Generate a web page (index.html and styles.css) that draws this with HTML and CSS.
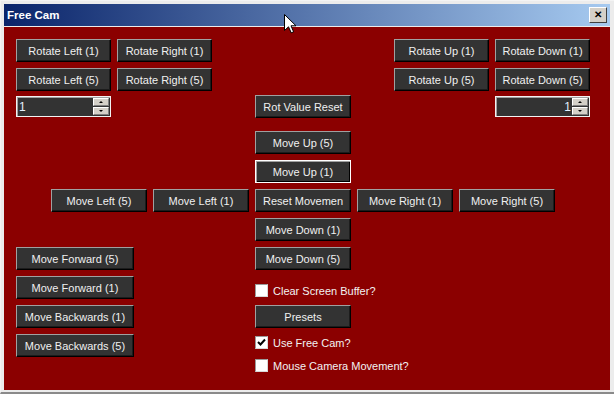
FILE: index.html
```html
<!DOCTYPE html>
<html lang="en">
<head>
  <meta charset="UTF-8">
  <title>Free Cam</title>
  <link rel="stylesheet" href="styles.css">
</head>
<body>
  <div class="window">
    <div class="titlebar">
      <span class="title">Free Cam</span>
      <span class="close">&#x2715;</span>
    </div>

    <div class="client">
      <!-- rotate buttons -->
      <div class="row">
        <div class="grp">
          <button class="btn narrow">Rotate Left (1)</button>
          <button class="btn narrow">Rotate Right (1)</button>
        </div>
        <div class="grp">
          <button class="btn narrow">Rotate Up (1)</button>
          <button class="btn narrow">Rotate Down (1)</button>
        </div>
      </div>
      <div class="row">
        <div class="grp">
          <button class="btn narrow">Rotate Left (5)</button>
          <button class="btn narrow">Rotate Right (5)</button>
        </div>
        <div class="grp">
          <button class="btn narrow">Rotate Up (5)</button>
          <button class="btn narrow">Rotate Down (5)</button>
        </div>
      </div>

      <!-- rotation value -->
      <div class="row values">
        <div class="spin">
          <span class="spin-val">1</span>
          <span class="spin-btns"><span class="up"></span><span class="down"></span></span>
        </div>
        <button class="btn">Rot Value Reset</button>
        <div class="spin right">
          <span class="spin-val">1</span>
          <span class="spin-btns"><span class="up"></span><span class="down"></span></span>
        </div>
      </div>

      <!-- movement pad -->
      <div class="pad">
        <button class="btn c3">Move Up (5)</button>
        <button class="btn c3 focus">Move Up (1)</button>
        <button class="btn c1">Move Left (5)</button>
        <button class="btn">Move Left (1)</button>
        <button class="btn">Reset Movemen</button>
        <button class="btn">Move Right (1)</button>
        <button class="btn">Move Right (5)</button>
        <button class="btn c3">Move Down (1)</button>
      </div>

      <div class="lower">
        <div class="col-left">
          <button class="btn wide">Move Forward (5)</button>
          <button class="btn wide">Move Forward (1)</button>
          <button class="btn wide">Move Backwards (1)</button>
          <button class="btn wide">Move Backwards (5)</button>
        </div>
        <div class="col-mid">
          <button class="btn">Move Down (5)</button>
          <label class="check first"><span class="box"></span>Clear Screen Buffer?</label>
          <button class="btn presets">Presets</button>
          <label class="check second"><span class="box">
            <svg width="11" height="11" viewBox="0 0 11 11"><path d="M2 5 L4.5 7.5 L9 2.5" fill="none" stroke="#000" stroke-width="2"/></svg>
          </span>Use Free Cam?</label>
          <label class="check third"><span class="box"></span>Mouse Camera Movement?</label>
        </div>
      </div>
    </div>

    <!-- mouse pointer over the title bar -->
    <svg class="cursor" width="13" height="20" viewBox="0 0 13 20">
      <path d="M0.5 0.5 L0.5 16.5 L4.5 12.8 L7.2 18.8 L9.6 17.8 L7 11.8 L12 11.8 Z" fill="#fff" stroke="#000" stroke-width="1"/>
    </svg>
  </div>
</body>
</html>
```

FILE: styles.css
```css
body {
  margin: 0;
  font-family: "Liberation Sans", Arial, sans-serif;
  background: #fff;
}

.window {
  position: relative;
  width: 614px;
  height: 394px;
  box-sizing: border-box;
  background: #ececec;
  border-top: 1px solid #f4f4f4;
  border-left: 1px solid #f4f4f4;
  border-bottom: 2px solid #8a8a8a;
  padding: 3px 4px 0 3px;
}

/* title bar */
.titlebar {
  height: 22px;
  display: flex;
  align-items: center;
  justify-content: space-between;
  padding: 0 3px 0 3px;
  background: linear-gradient(to right, #0a246a, #a6caf0);
}

.title {
  color: #fff;
  font-weight: bold;
  font-size: 11.5px;
  margin-top: -1px;
}

.close {
  width: 18px;
  height: 16px;
  box-sizing: border-box;
  background: #d4d0c8;
  border: 1px solid;
  border-color: #fff #404040 #404040 #fff;
  font-size: 10px;
  font-weight: bold;
  line-height: 14px;
  text-align: center;
  color: #000;
}

/* client area */
.client {
  margin-top: 1px;
  height: 363px;
  background: #8b0000;
  padding: 12px 20px 0 12px;
  box-sizing: border-box;
}

.row {
  display: flex;
  justify-content: space-between;
  margin-bottom: 6px;
}

.grp {
  display: flex;
  gap: 6px;
}

.btn {
  width: 96px;
  height: 23px;
  box-sizing: border-box;
  margin: 0;
  padding: 0;
  background: #333;
  border: 1px solid;
  border-color: #a0a0a0 #000 #000 #a0a0a0;
  box-shadow: inset -1px -1px 0 #1c1c1c;
  color: #f0f0f0;
  font-family: "Liberation Sans", Arial, sans-serif;
  font-size: 11px;
  white-space: nowrap;
  overflow: hidden;
}

.btn.narrow { width: 95px; }
.btn.wide { width: 118px; }

.btn.focus {
  border-color: #fff;
  box-shadow: inset 1px 1px 0 #a0a0a0, inset -1px -1px 0 #000;
}

/* numeric up/down */
.values {
  margin-top: -2px;
  align-items: flex-start;
}

.spin {
  width: 95px;
  height: 21px;
  margin-top: 1px;
  box-sizing: border-box;
  border: 1px solid #f2f2f2;
  box-shadow: inset 1px 1px 0 #a0a0a0;
  background: #333;
  display: flex;
  align-items: center;
  padding: 1px 1px 1px 2px;
}

.spin-val {
  flex: 1;
  color: #e4f0ff;
  font-size: 12px;
}

.spin.right .spin-val {
  text-align: right;
  padding-right: 1px;
}

.spin-btns {
  display: flex;
  flex-direction: column;
  gap: 1px;
  width: 16px;
}

.spin-btns span {
  height: 8px;
  box-sizing: border-box;
  background: #d4d0c8;
  border: 1px solid;
  border-color: #fff #808080 #808080 #fff;
  position: relative;
}

.spin-btns span::after {
  content: '';
  position: absolute;
  left: 5px;
  top: 2px;
  border-left: 2px solid transparent;
  border-right: 2px solid transparent;
}

.spin-btns .up::after { border-bottom: 2px solid #000; }
.spin-btns .down::after { border-top: 2px solid #000; }

/* movement pad */
.pad {
  display: grid;
  grid-template-columns: repeat(5, 96px);
  grid-auto-rows: 23px;
  gap: 6px;
  margin: 13px 0 0 35px;
}

.pad .c1 { grid-column: 1; }
.pad .c3 { grid-column: 3; }

.lower {
  display: flex;
  margin-top: 6px;
}

.col-left {
  display: flex;
  flex-direction: column;
  gap: 6px;
}

.col-mid {
  display: flex;
  flex-direction: column;
  margin-left: 121px;
}

.check {
  display: flex;
  align-items: center;
  height: 13px;
  color: #f2f2f2;
  font-size: 11px;
  white-space: nowrap;
}

.check.first { margin-top: 14px; }
.check.second { margin-top: 8px; }
.check.third { margin-top: 10px; }
.presets { margin-top: 8px; }

.box {
  width: 13px;
  height: 13px;
  box-sizing: border-box;
  background: #fff;
  border: 1px solid;
  border-color: #9a9a9a #d8d8d8 #d8d8d8 #9a9a9a;
  margin-right: 5px;
  display: flex;
  align-items: center;
  justify-content: center;
}

.cursor {
  position: absolute;
  left: 283px;
  top: 13px;
}
```
